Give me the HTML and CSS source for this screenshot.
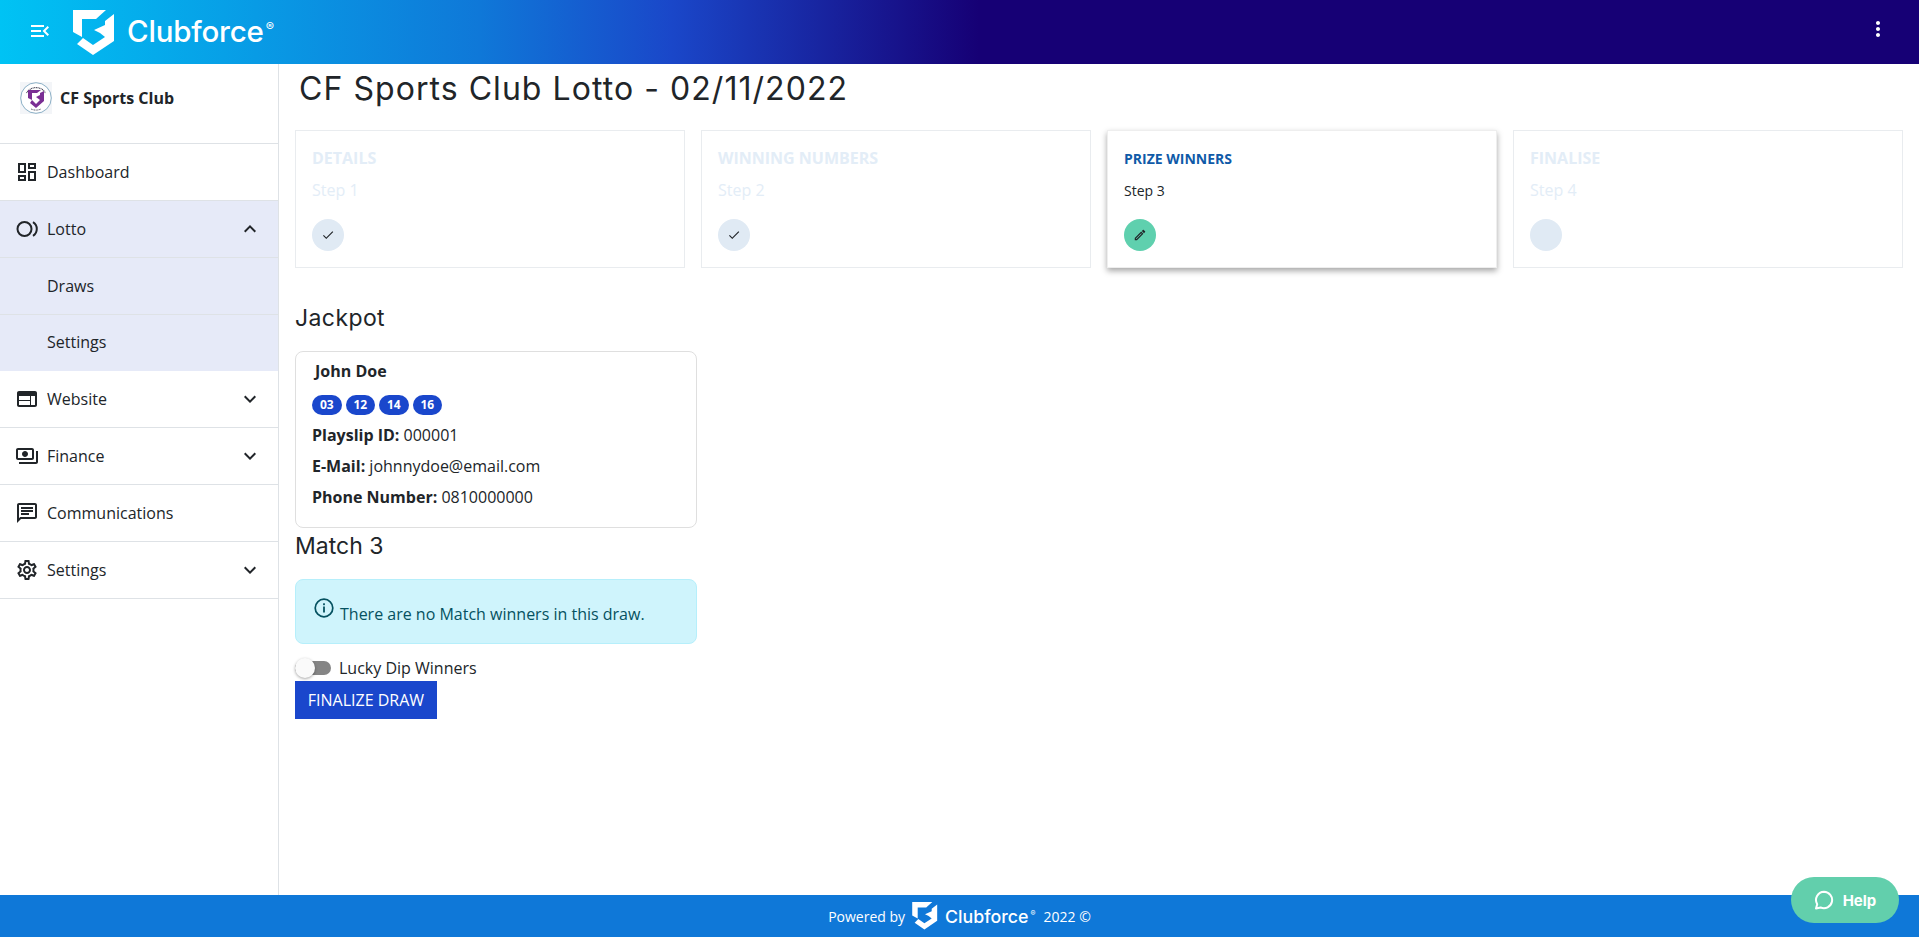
FILE: index.html
```html
<!DOCTYPE html>
<html lang="en">
<head>
<meta charset="utf-8">
<title>CF Sports Club Lotto</title>
<link rel="stylesheet" href="styles.css">
</head>
<body>
<div class="app">
  <header class="topbar">
    <div class="topbar-left">
      <svg class="icon menu-open" viewBox="0 0 24 24"><path d="M3 18h13v-2H3v2zm0-5h10v-2H3v2zm0-7v2h13V6H3zm18 9.59L17.42 12 21 8.41 19.59 7l-5 5 5 5L21 15.59z"/></svg>
      <svg class="brand-mark" viewBox="0 0 42 46"><path d="M0 0H33L23 9H9V27L0 22Z"/><path d="M41 4V31L20 45L4 34L10 28L20 35L32 27L27 23L21 20L32 15V11Z"/></svg>
      <span class="brand-name">Clubforce<sup class="reg">®</sup></span>
    </div>
    <svg class="icon kebab" viewBox="0 0 24 24"><path d="M12 8c1.100 0 2-.9 2-2s-.9-2-2-2-2 .9-2 2 .9 2 2 2zm0 2c-1.100 0-2 .9-2 2s.9 2 2 2 2-.9 2-2-.9-2-2-2zm0 6c-1.100 0-2 .9-2 2s.9 2 2 2 2-.9 2-2-.9-2-2-2z"/></svg>
  </header>

  <div class="middle">
    <aside class="sidebar">
      <div class="club">
        <svg class="club-logo" viewBox="0 0 32 32">
          <rect width="32" height="32" fill="#f3f5f8"/>
          <circle cx="16" cy="16" r="15.300" fill="#fff" stroke="#6f9cb8" stroke-width="0.800"/>
          <path d="M6.500 11A11 11 0 0 1 25.500 11" fill="none" stroke="#4a4a5a" stroke-width="1.200" stroke-dasharray="1 0.600"/>
          <path d="M11 27A12 12 0 0 0 21 27" fill="none" stroke="#4a4a5a" stroke-width="1" stroke-dasharray="1 0.600"/>
          <path d="M8 8H21L17 11H12V18L8 16Z" fill="#7a2f94"/>
          <path d="M24 9V19L16 26L10 21L12 18L16 22L20 18L16 15L20 13V11Z" fill="#7a2f94"/>
        </svg>
        <span class="club-name">CF Sports Club</span>
      </div>
      <nav class="nav">
        <a class="nav-item">
          <svg class="icon" viewBox="0 0 24 24"><path d="M19 5v2h-4V5h4M9 5v6H5V5h4m10 8v6h-4v-6h4M9 17v2H5v-2h4M21 3h-8v6h8V3zM11 3H3v10h8V3zm10 8h-8v10h8V11zm-10 4H3v6h8v-6z"/></svg>
          <span class="nav-label">Dashboard</span>
        </a>
        <a class="nav-item is-open">
          <svg class="icon" viewBox="0 0 24 24"><circle cx="9.500" cy="12" r="7" fill="none" stroke="currentColor" stroke-width="2"/><path d="M18 5.200a8 8 0 0 1 0 13.600" fill="none" stroke="currentColor" stroke-width="2"/></svg>
          <span class="nav-label">Lotto</span>
          <svg class="icon chev" viewBox="0 0 24 24"><path d="M7.410 15.410 12 10.830l4.590 4.580L18 14l-6-6-6 6z"/></svg>
        </a>
        <a class="nav-item is-open is-sub"><span class="nav-label">Draws</span></a>
        <a class="nav-item is-open is-sub is-last"><span class="nav-label">Settings</span></a>
        <a class="nav-item">
          <svg class="icon" viewBox="0 0 24 24"><path d="M20 4H4c-1.100 0-2 .9-2 2v12c0 1.100.9 2 2 2h16c1.100 0 2-.9 2-2V6c0-1.100-.9-2-2-2zm-5 14H4v-4h11v4zm0-5H4V9h11v4zm5 5h-4V9h4v9z"/></svg>
          <span class="nav-label">Website</span>
          <svg class="icon chev" viewBox="0 0 24 24"><path d="M7.410 8.590 12 13.170l4.590-4.580L18 10l-6 6-6-6z"/></svg>
        </a>
        <a class="nav-item">
          <svg class="icon" viewBox="0 0 24 24"><path d="M19 14V6c0-1.100-.9-2-2-2H3c-1.100 0-2 .9-2 2v8c0 1.100.9 2 2 2h14c1.100 0 2-.9 2-2zm-2 0H3V6h14v8zm-7-7c-1.660 0-3 1.340-3 3s1.340 3 3 3 3-1.340 3-3-1.340-3-3-3zm13 0v11c0 1.100-.9 2-2 2H4v-2h17V7h2z"/></svg>
          <span class="nav-label">Finance</span>
          <svg class="icon chev" viewBox="0 0 24 24"><path d="M7.410 8.590 12 13.170l4.590-4.580L18 10l-6 6-6-6z"/></svg>
        </a>
        <a class="nav-item">
          <svg class="icon" viewBox="0 0 24 24"><path d="M20 2H4c-1.100 0-2 .9-2 2v18l4-4h14c1.100 0 2-.9 2-2V4c0-1.100-.9-2-2-2zm0 14H5.170L4 17.170V4h16v12zM6 12h8v2H6zm0-3h12v2H6zm0-3h12v2H6z"/></svg>
          <span class="nav-label">Communications</span>
        </a>
        <a class="nav-item">
          <svg class="icon" viewBox="0 0 24 24"><path d="M19.430 12.980c.04-.32.07-.64.07-.98 0-.34-.03-.66-.07-.98l2.110-1.650c.19-.15.24-.42.12-.64l-2-3.460c-.09-.16-.26-.25-.44-.25-.06 0-.12.01-.17.03l-2.490 1c-.52-.4-1.080-.73-1.690-.98l-.38-2.650C14.460 2.180 14.250 2 14 2h-4c-.25 0-.46.18-.49.42l-.38 2.650c-.61.25-1.170.59-1.690.98l-2.490-1c-.06-.02-.12-.03-.18-.03-.17 0-.34.09-.43.25l-2 3.460c-.13.22-.07.49.12.64l2.110 1.650c-.04.32-.07.65-.07.98 0 .33.03.66.07.98l-2.110 1.650c-.19.15-.24.42-.12.64l2 3.460c.09.16.26.25.44.25.06 0 .12-.01.17-.03l2.490-1c.52.4 1.080.73 1.690.98l.38 2.650c.03.24.24.42.49.42h4c.25 0 .46-.18.49-.42l.38-2.650c.61-.25 1.170-.59 1.690-.98l2.490 1c.06.02.12.03.18.03.17 0 .34-.09.43-.25l2-3.460c.12-.22.07-.49-.12-.64l-2.110-1.650zm-1.980-1.710c.04.31.05.52.05.73 0 .21-.02.43-.05.73l-.14 1.130.89.7 1.080.84-.7 1.210-1.270-.51-1.040-.42-.9.68c-.43.32-.84.56-1.250.73l-1.060.43-.16 1.130-.2 1.350h-1.400l-.19-1.350-.16-1.130-1.060-.43c-.43-.18-.83-.41-1.230-.71l-.91-.7-1.060.43-1.270.51-.7-1.210 1.080-.84.89-.7-.14-1.130c-.03-.31-.05-.54-.05-.74s.02-.43.05-.73l.14-1.130-.89-.7-1.080-.84.7-1.210 1.270.51 1.040.42.9-.68c.43-.32.84-.56 1.250-.73l1.060-.43.16-1.130.2-1.350h1.390l.19 1.350.16 1.130 1.060.43c.43.18.83.41 1.230.71l.91.7 1.060-.43 1.270-.51.7 1.210-1.070.85-.89.7.14 1.130zM12 8c-2.210 0-4 1.790-4 4s1.790 4 4 4 4-1.790 4-4-1.790-4-4-4zm0 6c-1.100 0-2-.9-2-2s.9-2 2-2 2 .9 2 2-.9 2-2 2z"/></svg>
          <span class="nav-label">Settings</span>
          <svg class="icon chev" viewBox="0 0 24 24"><path d="M7.410 8.590 12 13.170l4.590-4.580L18 10l-6 6-6-6z"/></svg>
        </a>
      </nav>
    </aside>

    <main class="content">
      <h1 class="page-title">CF Sports Club Lotto - 02/11/2022</h1>

      <section class="steps">
        <div class="step">
          <h6 class="step-title">DETAILS</h6>
          <p class="step-sub">Step 1</p>
          <span class="step-dot"><svg class="step-icon" viewBox="0 0 24 24"><path d="M9 16.170 4.830 12l-1.420 1.410L9 19 21 7l-1.410-1.410z"/></svg></span>
        </div>
        <div class="step">
          <h6 class="step-title">WINNING NUMBERS</h6>
          <p class="step-sub">Step 2</p>
          <span class="step-dot"><svg class="step-icon" viewBox="0 0 24 24"><path d="M9 16.170 4.830 12l-1.420 1.410L9 19 21 7l-1.410-1.410z"/></svg></span>
        </div>
        <div class="step is-active">
          <h6 class="step-title">PRIZE WINNERS</h6>
          <p class="step-sub">Step 3</p>
          <span class="step-dot"><svg class="step-icon" viewBox="0 0 24 24"><path d="M14.060 9.020l.92.92L5.920 19H5v-.92l9.060-9.060M17.660 3c-.25 0-.51.1-.7.29l-1.830 1.830 3.750 3.750 1.830-1.830c.39-.39.39-1.020 0-1.410l-2.340-2.340c-.2-.2-.45-.29-.71-.29zm-3.600 3.190L3 17.250V21h3.750L17.810 9.940l-3.750-3.750z"/></svg></span>
        </div>
        <div class="step">
          <h6 class="step-title">FINALISE</h6>
          <p class="step-sub">Step 4</p>
          <span class="step-dot"></span>
        </div>
      </section>

      <h2 class="section-title jackpot-title">Jackpot</h2>
      <article class="winner">
        <h3 class="winner-name">John Doe</h3>
        <div class="chips">
          <span class="chip">03</span><span class="chip">12</span><span class="chip">14</span><span class="chip">16</span>
        </div>
        <p class="winner-line"><b>Playslip ID:</b> 000001</p>
        <p class="winner-line"><b>E-Mail:</b> johnnydoe@email.com</p>
        <p class="winner-line"><b>Phone Number:</b> 0810000000</p>
      </article>

      <h2 class="section-title match-title">Match 3</h2>
      <div class="alert">
        <svg class="alert-icon" viewBox="0 0 20 20"><circle cx="10" cy="10" r="8.800" fill="none" stroke="currentColor" stroke-width="1.700"/><rect x="9.100" y="8.500" width="1.800" height="6"/><rect x="9.100" y="5.300" width="1.800" height="1.900"/></svg>
        <span class="alert-text">There are no Match winners in this draw.</span>
      </div>
      <label class="toggle-row">
        <span class="toggle"><span class="toggle-knob"></span></span>
        <span class="toggle-label">Lucky Dip Winners</span>
      </label>
      <button class="finalize" type="button">FINALIZE DRAW</button>
    </main>
  </div>

  <footer class="footer">
    <span>Powered by</span>
    <svg class="footer-mark" viewBox="0 0 42 46"><path d="M0 0H33L23 9H9V27L0 22Z"/><path d="M41 4V31L20 45L4 34L10 28L20 35L32 27L27 23L21 20L32 15V11Z"/></svg>
    <span class="footer-brand">Clubforce<sup class="reg">®</sup></span>
    <span>2022 ©</span>
  </footer>
</div>

<button class="help" type="button">
  <svg class="help-icon" viewBox="0 0 20 20"><path d="M10 1.800a8.200 8.200 0 1 1-3.400 15.700L2 18.500l1.200-4.300A8.200 8.200 0 0 1 10 1.800z" fill="none" stroke="currentColor" stroke-width="2" stroke-linejoin="round"/></svg>
  <span>Help</span>
</button>
</body>
</html>
```

FILE: styles.css
```css
* { box-sizing: border-box; }

html, body {
  margin: 0;
  height: 100%;
  background: #fff;
}

body {
  font-family: "Open Sans", "Noto Sans", sans-serif;
  font-size: 16px;
  color: #212529;
  overflow: hidden;
}

.app {
  display: flex;
  flex-direction: column;
  height: 939px;
  padding-bottom: 2px;
}

.icon {
  width: 24px;
  height: 24px;
  flex: none;
  fill: currentColor;
}

/* Top bar */
.topbar {
  flex: none;
  height: 64px;
  display: flex;
  align-items: center;
  justify-content: space-between;
  padding: 0 29px 0 28px;
  color: #fff;
  background: linear-gradient(90deg, #00c3f4 0%, #0f78d8 25%, #1a47c9 35%, #160075 51%, #160075 100%);
}

.topbar-left {
  display: flex;
  align-items: center;
}

.menu-open { margin-right: 21px; margin-bottom: 3px; }

.kebab { margin-bottom: 6px; }

.brand-mark {
  width: 42px;
  height: 46px;
  fill: #fff;
  margin-top: 1px;
  margin-right: 12px;
}

.brand-name {
  font-family: "Inter", "Lato", sans-serif;
  font-size: 29.500px;
  font-weight: 500;
  letter-spacing: -0.2px;
  margin-bottom: 2px;
}

.reg {
  font-size: 42%;
  font-weight: 400;
  vertical-align: super;
  line-height: 0;
  margin-left: 2px;
}

/* Layout */
.middle {
  flex: 1;
  display: flex;
  min-height: 0;
}

/* Sidebar */
.sidebar {
  flex: none;
  width: 279px;
  border-right: 1px solid #dee2e6;
}

.club {
  height: 80px;
  display: flex;
  align-items: center;
  gap: 8px;
  padding: 0 20px 12px;
  border-bottom: 1px solid #dee2e6;
}

.club-logo { width: 32px; height: 32px; flex: none; }

.club-name {
  font-size: 16px;
  font-weight: 700;
  color: #212529;
}

.nav { display: flex; flex-direction: column; }

.nav-item {
  height: 57px;
  display: flex;
  align-items: center;
  gap: 8px;
  padding: 0 16px 0 15px;
  border-bottom: 1px solid #dee2e6;
  color: #212529;
}

.nav-item.is-open { background: #e6eaf8; }

.nav-item.is-sub { padding-left: 47px; padding-bottom: 1px; }

.nav-item.is-last { height: 56px; border-bottom: 0; padding-bottom: 2px; }

.nav-label { flex: 1; }

/* Content */
.content {
  flex: 1;
  min-width: 0;
  padding: 0 16px;
}

.page-title {
  margin: 0;
  height: 66px;
  padding: 5px 0 0 4px;
  font-family: "Inter", "Lato", sans-serif;
  font-size: 32px;
  line-height: 40px;
  font-weight: 400;
  letter-spacing: 1.050px;
  color: #212529;
}

.steps {
  display: grid;
  grid-template-columns: repeat(4, 1fr);
  gap: 16px;
}

.step {
  height: 138px;
  padding: 18px 16px 0;
  border: 1px solid #e9ecef;
  background: #fff;
}

.step-title {
  margin: 0;
  font-size: 16px;
  line-height: 18px;
  font-weight: 700;
  color: #e3edf7;
}

.step-sub {
  margin: 13px 0 0;
  font-size: 16px;
  line-height: 20px;
  color: #e3edf7;
}

.step-dot {
  display: flex;
  align-items: center;
  justify-content: center;
  width: 32px;
  height: 32px;
  margin-top: 19px;
  border-radius: 50%;
  background: #e0eaf4;
}

.step-icon { width: 14px; height: 14px; fill: #212529; }

.step.is-active {
  padding-top: 19px;
  box-shadow: 0 3px 6px rgba(0, 0, 0, 0.35);
  border-color: #eee;
}

.is-active .step-title { font-size: 14px; color: #0f5aa8; }
.is-active .step-sub { font-size: 14px; color: #212529; }
.is-active .step-dot { margin-top: 18px; background: #5fd0ae; }

.section-title {
  margin: 0;
  height: 36px;
  font-family: "Inter", "Lato", sans-serif;
  font-size: 23px;
  line-height: 36px;
  font-weight: 400;
  color: #212529;
}

.jackpot-title { margin-top: 32px; margin-bottom: 15px; letter-spacing: 0.4px; }
.match-title { margin-bottom: 15px; }

/* Winner card */
.winner {
  width: 402px;
  height: 177px;
  padding: 7px 13px 0 16px;
  border: 1px solid #dfdfdf;
  border-radius: 8px;
}

.winner-name {
  margin: 0 0 0 3px;
  font-size: 16px;
  line-height: 24px;
  font-weight: 700;
}

.chips {
  display: flex;
  gap: 4px;
  margin-top: 12px;
  margin-bottom: 5px;
}

.chip {
  height: 20px;
  width: 29.500px;
  border-radius: 10px;
  background: #1a47cc;
  color: #fff;
  font-size: 12px;
  font-weight: 700;
  line-height: 20px;
  text-align: center;
}

.winner-line {
  margin: 0;
  height: 31px;
  font-size: 16px;
  line-height: 31px;
}

/* Alert */
.alert {
  width: 402px;
  height: 65px;
  display: flex;
  align-items: flex-start;
  gap: 6px;
  padding: 18px 18px 0;
  color: #055160;
  background: #cff4fc;
  border: 1px solid #b6effb;
  border-radius: 8px;
}

.alert-icon { width: 20px; height: 20px; flex: none; fill: currentColor; }

.alert-text { line-height: 24px; margin-top: 4px; }

/* Toggle */
.toggle-row {
  height: 37px;
  padding-top: 10px;
  display: flex;
  align-items: center;
  gap: 8px;
}

.toggle {
  position: relative;
  width: 36px;
  height: 14px;
  border-radius: 7px;
  background: #858585;
}

.toggle-knob {
  position: absolute;
  left: 0;
  top: -3px;
  width: 20px;
  height: 20px;
  border-radius: 50%;
  background: #fafafa;
  box-shadow: 0 1px 3px rgba(0, 0, 0, 0.35);
}

.finalize {
  display: block;
  width: 142px;
  height: 38px;
  border: 0;
  padding: 0;
  background: #1a47cc;
  color: #fff;
  font-family: inherit;
  font-size: 16px;
}

/* Footer */
.footer {
  flex: none;
  height: 42px;
  display: flex;
  align-items: center;
  justify-content: center;
  background: #0f78d8;
  color: #fff;
  font-size: 14px;
}

.footer-mark {
  width: 26px;
  height: 28px;
  fill: #fff;
  margin: 0 7px;
}

.footer-brand {
  font-family: "Inter", "Lato", sans-serif;
  font-size: 17.800px;
  font-weight: 500;
  margin-right: 8px;
}

/* Help launcher */
.help {
  position: fixed;
  left: 1791px;
  top: 877px;
  width: 108px;
  height: 46px;
  display: flex;
  align-items: center;
  justify-content: center;
  gap: 9px;
  border: 0;
  border-radius: 23px;
  background: #62cfac;
  color: #fff;
  font-family: "Inter", "Roboto", sans-serif;
  font-size: 15px;
  font-weight: 700;
}

.help-icon { width: 20px; height: 20px; flex: none; }
```
